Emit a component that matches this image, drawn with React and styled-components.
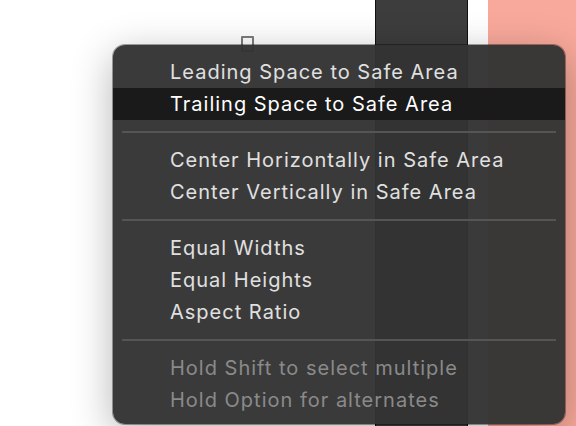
import React from 'react'
import styled, { createGlobalStyle } from 'styled-components'

const GlobalStyle = createGlobalStyle`
    html, body {
        margin: 0;
        padding: 0;
        background: #ffffff;
        overflow: hidden;
    }
`

const groups = [
    [
        { label: 'Leading Space to Safe Area' },
        { label: 'Trailing Space to Safe Area', active: true },
    ],
    [
        { label: 'Center Horizontally in Safe Area' },
        { label: 'Center Vertically in Safe Area' },
    ],
    [
        { label: 'Equal Widths' },
        { label: 'Equal Heights' },
        { label: 'Aspect Ratio' },
    ],
    [
        { label: 'Hold Shift to select multiple', disabled: true },
        { label: 'Hold Option for alternates', disabled: true },
    ],
]

function App() {
    return (
        <Canvas>
            <GlobalStyle />
            <Backdrop>
                <Spacer />
                <DarkColumn />
                <Gap />
                <PinkColumn />
            </Backdrop>
            <Handle />
            <Menu>
                {groups.map((group, gi) => (
                    <React.Fragment key={gi}>
                        {gi > 0 && <Separator />}
                        {group.map(item => (
                            <Item key={item.label} active={item.active} disabled={item.disabled}>
                                {item.label}
                            </Item>
                        ))}
                    </React.Fragment>
                ))}
            </Menu>
        </Canvas>
    )
}

export default App

const Canvas = styled.div`
    position: relative;
    width: 576px;
    height: 426px;
    overflow: hidden;
    background: #ffffff;
`

const Backdrop = styled.div`
    display: flex;
    height: 100%;
`

const Spacer = styled.div`
    width: 375px;
`

const DarkColumn = styled.div`
    width: 91px;
    background: #3d3d3d;
    border-left: 1px solid #111;
    border-right: 1px solid #111;
`

const Gap = styled.div`
    width: 20px;
`

const PinkColumn = styled.div`
    flex: 1;
    background: #f9a99b;
`

const Handle = styled.div`
    position: absolute;
    left: 241px;
    top: 36px;
    width: 9px;
    height: 12px;
    border: 2px solid #7d7d7d;
    border-radius: 1px;
    background: #fff;
`

const Menu = styled.div`
    position: absolute;
    left: 113px;
    top: 45px;
    width: 452px;
    box-sizing: border-box;
    padding: 11px 0 8px;
    display: flex;
    flex-direction: column;
    background: rgba(51, 51, 51, 0.965);
    border-radius: 12px;
    box-shadow: 0 0 0 1px rgba(0, 0, 0, 0.35), 0 10px 40px rgba(0, 0, 0, 0.3);
    font-family: Inter, "Noto Sans", sans-serif;
    font-size: 20px;
    letter-spacing: 1px;
`

const Item = styled.div`
    height: 32px;
    display: flex;
    align-items: center;
    padding-left: 57px;
    color: ${p => (p.disabled ? '#8a8a8a' : p.active ? '#ffffff' : '#e0e0e0')};
    background: ${p => (p.active ? '#1a1a1a' : 'transparent')};
    white-space: nowrap;
`

const Separator = styled.div`
    height: 2px;
    margin: 11px 9px;
    background: #555555;
`
